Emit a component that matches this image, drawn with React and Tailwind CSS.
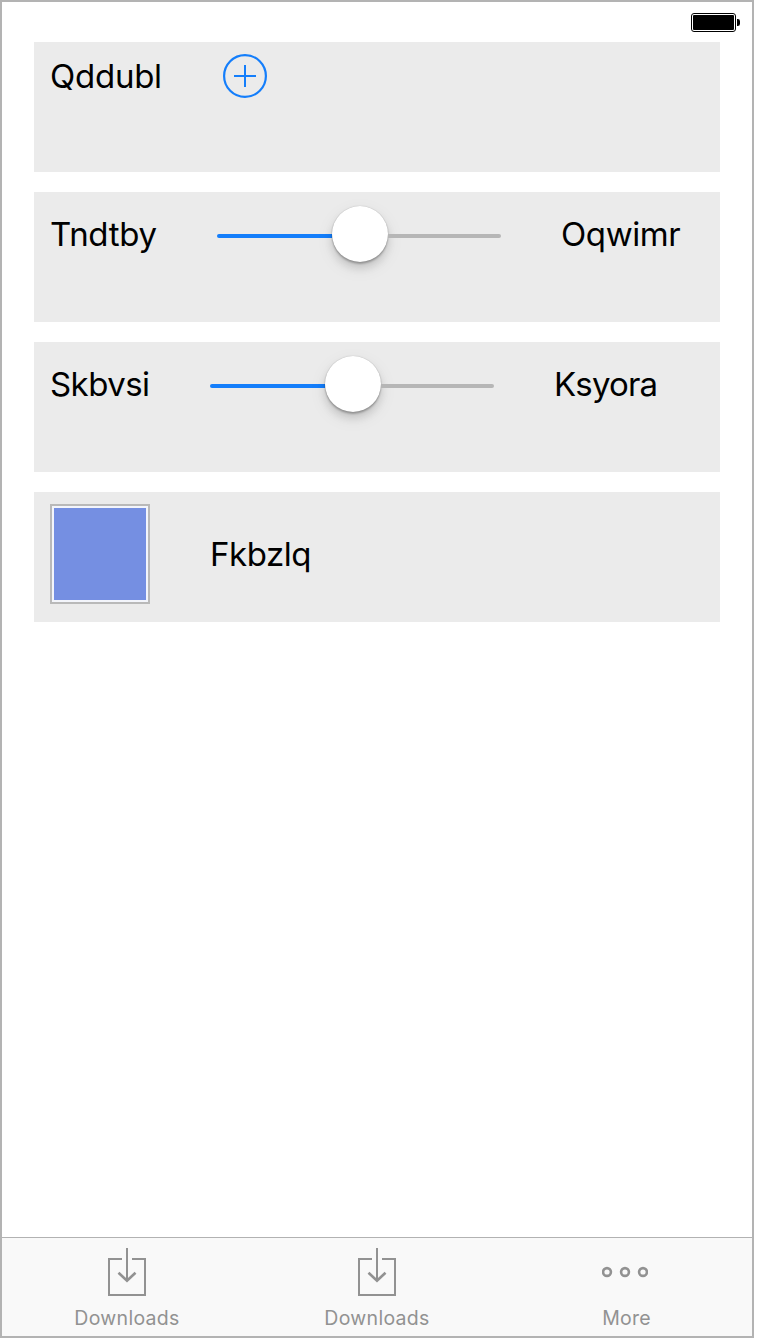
const labelClass =
  "block shrink-0 whitespace-nowrap font-['Inter','Liberation_Sans',sans-serif] text-[33px] leading-10 text-black";

function Label({ children, className = "" }) {
  return <span className={`${labelClass} ${className}`}>{children}</span>;
}

function Battery() {
  return (
    <svg className="block h-[19px] w-[49px]" viewBox="0 0 49 19" aria-hidden="true">
      <rect x="0.5" y="0.5" width="44" height="18" rx="2.5" fill="white" stroke="black" />
      <rect x="2" y="2" width="41" height="15" rx="1" fill="black" />
      <path d="M46 6h.8A2.2 2.2 0 0 1 49 8.2v2.6A2.2 2.2 0 0 1 46.8 13H46z" fill="black" />
    </svg>
  );
}

function AddButton() {
  return (
    <button type="button" aria-label="Add" className="block h-11 w-11 shrink-0">
      <svg className="block h-11 w-11" viewBox="0 0 44 44" fill="none" stroke="#147efb" strokeWidth="2">
        <circle cx="22" cy="22" r="20.9" strokeWidth="2.2" />
        <path d="M11 22h22M22 11v22" />
      </svg>
    </button>
  );
}

function Slider() {
  return (
    <div className="flex h-14 w-[284px] shrink-0 items-center">
      <div className="mt-1 h-1 w-[115px] rounded-l-full bg-[#147efb]" />
      <div className="h-14 w-14 shrink-0 rounded-full bg-white shadow-[0_0_1px_rgba(0,0,0,0.3),0_2px_2px_rgba(0,0,0,0.24),0_6px_8px_rgba(0,0,0,0.12),0_6px_18px_rgba(0,0,0,0.08)]" />
      <div className="mt-1 h-1 flex-1 rounded-r-full bg-[#b6b6b6]" />
    </div>
  );
}

function DownloadIcon() {
  return (
    <svg className="block h-12 w-[38px]" viewBox="0 0 38 48" fill="none" stroke="#929292" strokeWidth="2">
      <path d="M14 11H1v36h36V11H24" />
      <path d="M19 0v33" />
      <path d="M10.5 24.8l8.5 8 8.5-8" strokeWidth="2.6" />
    </svg>
  );
}

function MoreIcon() {
  return (
    <svg className="mr-1 block h-12 w-[46px]" viewBox="0 0 46 48" fill="none" stroke="#929292" strokeWidth="2.6">
      <circle cx="5" cy="24" r="3.9" />
      <circle cx="23" cy="24" r="3.9" />
      <circle cx="41" cy="24" r="3.9" />
    </svg>
  );
}

function Tab({ icon, children, className }) {
  return (
    <button type="button" className="flex w-[250px] flex-col items-center pt-2.5">
      {icon}
      <span
        className={`mt-2.5 font-['Inter','Liberation_Sans',sans-serif] text-[19.5px] leading-6 text-[#929292] ${className}`}
      >
        {children}
      </span>
    </button>
  );
}

export default function App() {
  return (
    <div className="h-[1340px] w-[760px] bg-white">
      <div className="flex h-[1338px] w-[754px] flex-col border-2 border-[#b3b3b3] bg-white">
        <header className="flex h-10 shrink-0 justify-end pt-[11px] pr-3">
          <Battery />
        </header>

        <main className="flex flex-1 flex-col gap-5 px-8">
          <section className="flex h-[130px] w-[686px] items-start bg-[#ebebeb] pt-3 pl-4">
            <Label className="mt-0.5 w-[173px] tracking-[-0.25px]">Qddubl</Label>
            <AddButton />
          </section>

          <section className="flex h-[130px] w-[686px] items-start bg-[#ebebeb] pt-3.5 pl-4">
            <Label className="mt-2 w-[167px] tracking-[-0.3px]">Tndtby</Label>
            <Slider />
            <Label className="mt-2 ml-[60px] tracking-[-0.4px]">Oqwimr</Label>
          </section>

          <section className="flex h-[130px] w-[686px] items-start bg-[#ebebeb] pt-3.5 pl-4">
            <Label className="mt-2 w-40 tracking-[-0.55px]">Skbvsi</Label>
            <Slider />
            <Label className="mt-2 ml-[60px] tracking-[-0.85px]">Ksyora</Label>
          </section>

          <section className="flex h-[130px] w-[686px] items-start bg-[#ebebeb] pt-3 pl-4">
            <div className="h-[100px] w-[100px] shrink-0 border-2 border-[#b9b9b9] bg-[#f3f5fb] p-0.5">
              <div className="h-full w-full bg-[#758fe2]" />
            </div>
            <Label className="mt-[30px] ml-[60px] tracking-[-0.45px]">Fkbzlq</Label>
          </section>
        </main>

        <nav className="flex h-[99px] shrink-0 border-t border-[#b2b2b2] bg-[#f9f9f9]">
          <Tab icon={<DownloadIcon />} className="tracking-[0.3px]">Downloads</Tab>
          <Tab icon={<DownloadIcon />} className="tracking-[0.3px]">Downloads</Tab>
          <Tab icon={<MoreIcon />} className="mr-px tracking-[0.2px]">More</Tab>
        </nav>
      </div>
    </div>
  );
}
